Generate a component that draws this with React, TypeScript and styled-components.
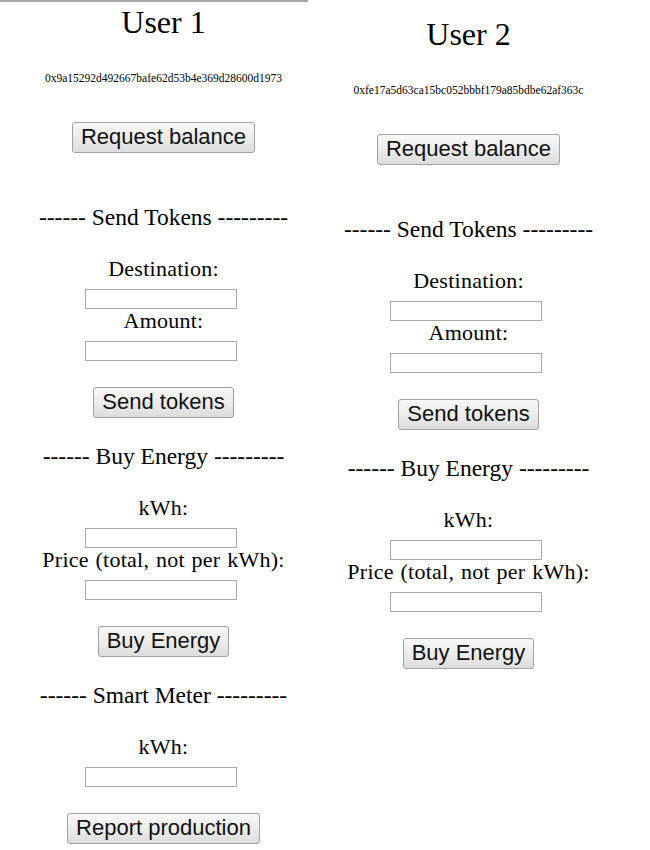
import React from "react";
import styled, { createGlobalStyle } from "styled-components";

const GlobalStyle = createGlobalStyle`
  html, body {
    margin: 0;
    padding: 0;
    background: #ffffff;
    color: #000000;
    font-family: "Liberation Serif", "Times New Roman", serif;
  }
`;

const Page = styled.div`
  display: flex;
  flex-direction: column;
  align-items: flex-start;
`;

const TopRule = styled.div`
  width: 308px;
  height: 2px;
  background: #a3a3a3;
`;

const Columns = styled.div`
  display: flex;
  align-items: flex-start;
  padding-left: 11px;
`;

const Column = styled.div<{ $offset: number }>`
  width: 305px;
  display: flex;
  flex-direction: column;
  align-items: center;
  padding-top: ${(p) => p.$offset}px;
`;

const Title = styled.h1`
  margin: 2px 0 0;
  font-family: "Liberation Serif", "Times New Roman", serif;
  font-weight: normal;
  font-size: 32px;
  line-height: 36px;
  white-space: nowrap;
`;

const Address = styled.div`
  margin-top: 32px;
  font-family: "Liberation Serif", "Times New Roman", serif;
  font-size: 11.5px;
  line-height: 13px;
  white-space: nowrap;
`;

const ActionButton = styled.button<{ $mt: number }>`
  margin-top: ${(p) => p.$mt}px;
  font-family: "Liberation Sans", Arial, sans-serif;
  font-size: 22px;
  line-height: 25px;
  color: #111111;
  padding: 1px 8px 3px;
  border: 1px solid #a2a2a2;
  border-radius: 3px;
  background: linear-gradient(to bottom, #f8f8f8 0%, #ececec 50%, #dddddd 100%);
  white-space: nowrap;
  cursor: pointer;
`;

const SectionHeading = styled.div<{ $mt: number }>`
  margin-top: ${(p) => p.$mt}px;
  font-size: 23.5px;
  line-height: 24px;
  white-space: nowrap;
`;

const Label = styled.div<{ $mt: number }>`
  margin-top: ${(p) => p.$mt}px;
  font-size: 22px;
  line-height: 24px;
  letter-spacing: 0.25px;
  word-spacing: 1px;
  white-space: nowrap;
`;

const Field = styled.input`
  box-sizing: border-box;
  margin: 8px 6px 0 0;
  width: 152px;
  height: 20px;
  padding: 0 2px;
  border: 1px solid #a9a9a9;
  border-radius: 0;
  background: #ffffff;
  outline: none;
`;

type UserProps = { name: string; address: string; offset: number; meter?: boolean };

const UserPanel = ({ name, address, offset, meter }: UserProps) => (
  <Column $offset={offset}>
    <Title>{name}</Title>
    <Address>{address}</Address>
    <ActionButton $mt={37}>Request balance</ActionButton>

    <SectionHeading $mt={52}>------ Send Tokens ---------</SectionHeading>
    <Label $mt={28}>Destination:</Label>
    <Field type="text" />
    <Label $mt={0}>Amount:</Label>
    <Field type="text" />
    <ActionButton $mt={26}>Send tokens</ActionButton>

    <SectionHeading $mt={26}>------ Buy Energy ---------</SectionHeading>
    <Label $mt={28}>kWh:</Label>
    <Field type="text" />
    <Label $mt={0}>Price (total, not per kWh):</Label>
    <Field type="text" />
    <ActionButton $mt={26}>Buy Energy</ActionButton>

    {meter && (
      <>
        <SectionHeading $mt={26}>------ Smart Meter ---------</SectionHeading>
        <Label $mt={28}>kWh:</Label>
        <Field type="text" />
        <ActionButton $mt={26}>Report production</ActionButton>
      </>
    )}
  </Column>
);

export default function App() {
  return (
    <Page>
      <GlobalStyle />
      <TopRule />
      <Columns>
        <UserPanel
          name="User 1"
          address="0x9a15292d492667bafe62d53b4e369d28600d1973"
          offset={0}
          meter
        />
        <UserPanel
          name="User 2"
          address="0xfe17a5d63ca15bc052bbbf179a85bdbe62af363c"
          offset={12}
        />
      </Columns>
    </Page>
  );
}
